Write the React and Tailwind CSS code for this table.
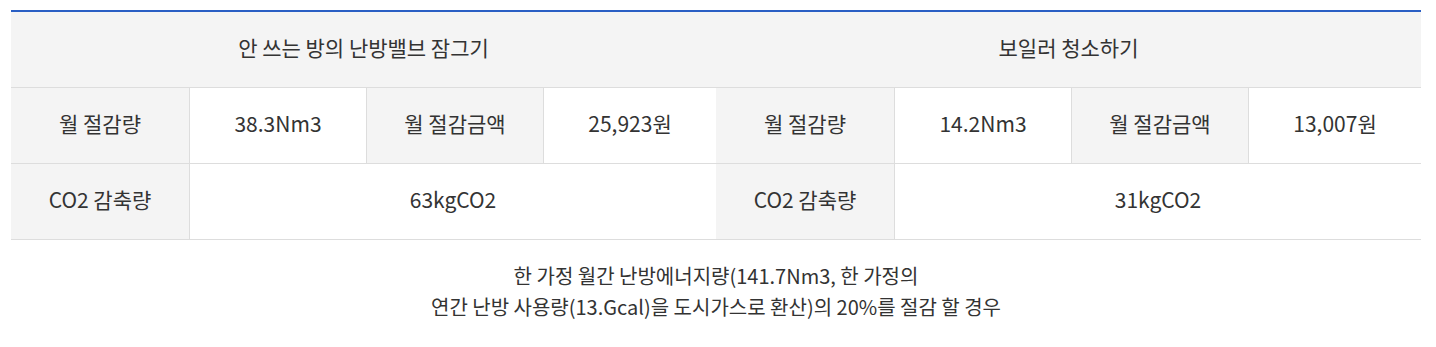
import React from "react";

const font = { fontFamily: '"Noto Sans CJK KR", "Noto Sans", sans-serif' };

const Half = ({ title, amount, money, co2 }) => {
  const cell = "h-[76px] pb-[4px] flex items-center justify-center border-b border-[#dddddd]";
  return (
    <div className="grid grid-cols-[178px_177px_177px_173px]">
      <div className={`${cell} col-span-4 bg-[#f4f4f4]`}>{title}</div>
      <div className={`${cell} bg-[#f4f4f4]`}>월 절감량</div>
      <div className={`${cell} border-l bg-white`}>{amount}</div>
      <div className={`${cell} border-l bg-[#f4f4f4]`}>월 절감금액</div>
      <div className={`${cell} border-l bg-white`}>{money}</div>
      <div className={`${cell} bg-[#f4f4f4]`}>CO2 감축량</div>
      <div className={`${cell} border-l col-span-3 bg-white`}>{co2}</div>
    </div>
  );
};

export default function App() {
  return (
    <div className="bg-white pl-[11px] pr-[15px] pt-[10px] pb-[24px] text-[21px] text-[#333333]" style={font}>
      <div className="border-t-2 border-[#2a5fc4] grid grid-cols-[705px_705px]">
        <Half title="안 쓰는 방의 난방밸브 잠그기" amount="38.3Nm3" money="25,923원" co2="63kgCO2" />
        <Half title="보일러 청소하기" amount="14.2Nm3" money="13,007원" co2="31kgCO2" />
      </div>
      <p className="text-center text-[20px] leading-[31px] pt-[20px]">
        한 가정 월간 난방에너지량(141.7Nm3, 한 가정의
        <br />
        연간 난방 사용량(13.Gcal)을 도시가스로 환산)의 20%를 절감 할 경우
      </p>
    </div>
  );
}
